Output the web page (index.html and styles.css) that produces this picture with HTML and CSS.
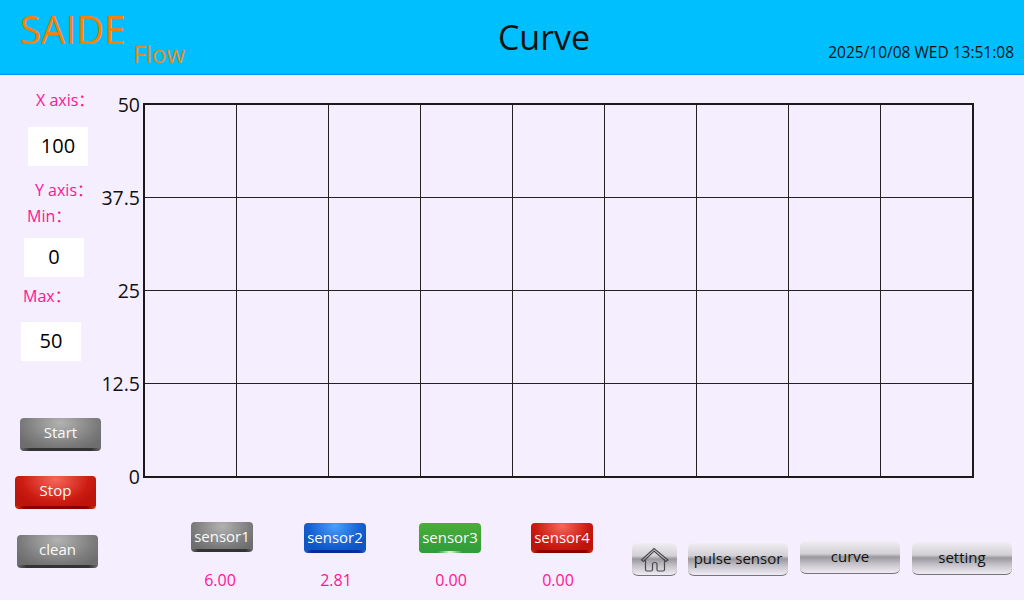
FILE: index.html
```html
<!DOCTYPE html>
<html lang="en">
<head>
    <meta charset="UTF-8">
    <title>Curve</title>
    <link rel="stylesheet" href="styles.css">
</head>
<body>
    <header class="top-bar">
        <div class="logo">
            <span class="logo-main">SAIDE</span>
            <span class="logo-sub">Flow</span>
        </div>
        <h1 class="page-title">Curve</h1>
        <div class="clock">2025/10/08 WED 13:51:08</div>
    </header>

    <div class="content">
        <aside class="side-panel">
            <div class="field-label label-x">X axis：</div>
            <div class="value-box box-x">100</div>
            <div class="field-label label-y">Y axis：</div>
            <div class="field-label label-min">Min：</div>
            <div class="value-box box-min">0</div>
            <div class="field-label label-max">Max：</div>
            <div class="value-box box-max">50</div>
            <button class="btn btn-grey btn-start">Start</button>
            <button class="btn btn-red btn-stop">Stop</button>
            <button class="btn btn-grey btn-clean">clean</button>
        </aside>

        <main class="main-area">
            <div class="chart-wrap">
                <div class="y-axis">
                    <span class="tick"><span>50</span></span>
                    <span class="tick"><span>37.5</span></span>
                    <span class="tick"><span>25</span></span>
                    <span class="tick"><span>12.5</span></span>
                    <span class="tick"><span>0</span></span>
                </div>
                <div class="chart" id="chart">
                    <i></i><i></i><i></i><i></i><i></i><i></i><i></i><i></i><i></i>
                    <i></i><i></i><i></i><i></i><i></i><i></i><i></i><i></i><i></i>
                    <i></i><i></i><i></i><i></i><i></i><i></i><i></i><i></i><i></i>
                    <i></i><i></i><i></i><i></i><i></i><i></i><i></i><i></i><i></i>
                </div>
            </div>

            <footer class="bottom-bar">
                <div class="sensor sensor-1">
                    <button class="btn btn-grey btn-sensor">sensor1</button>
                    <span class="sensor-value">6.00</span>
                </div>
                <div class="sensor sensor-2">
                    <button class="btn btn-blue btn-sensor">sensor2</button>
                    <span class="sensor-value">2.81</span>
                </div>
                <div class="sensor sensor-3">
                    <button class="btn btn-green btn-sensor">sensor3</button>
                    <span class="sensor-value">0.00</span>
                </div>
                <div class="sensor sensor-4">
                    <button class="btn btn-red btn-sensor">sensor4</button>
                    <span class="sensor-value">0.00</span>
                </div>
                <nav class="nav">
                    <button class="nav-btn nav-home" aria-label="home">
                        <svg width="30" height="26" viewBox="0 0 30 26" fill="none" stroke="#4a4a4a" stroke-width="1.2">
                            <path d="M1.5 14 L14 2.5 L28 14 L26 15.5 L14 5 L3.5 15.5 Z"/>
                            <path d="M5.5 13.5 V23.5 Q5.5 25 7 25 H11 Q12.5 25 12.5 23.5 V18.5 Q12.5 16.5 14.7 16.5 Q17 16.5 17 18.5 V23.5 Q17 25 18.5 25 H23 Q24.5 25 24.5 23.5 V13.5"/>
                        </svg>
                    </button>
                    <button class="nav-btn nav-pulse">pulse sensor</button>
                    <button class="nav-btn nav-curve">curve</button>
                    <button class="nav-btn nav-setting">setting</button>
                </nav>
            </footer>
        </main>
    </div>
</body>
</html>
```

FILE: styles.css
```css
* {
    box-sizing: border-box;
}
html, body {
    margin: 0;
    height: 600px;
    overflow: hidden;
}
body {
    display: flex;
    flex-direction: column;
    width: 1024px;
    font-family: "Open Sans", "Noto Sans CJK SC", sans-serif;
    background-color: #f5eeff;
    color: #111;
}

/* header */
.top-bar {
    flex: none;
    display: flex;
    height: 75px;
    background-color: #00bfff;
    border-bottom: 1px solid #0a90f5;
}
.logo {
    display: flex;
    width: 300px;
    padding-left: 20px;
}
.logo-main {
    margin-top: 4px;
    font-size: 38.5px;
    line-height: 50px;
    color: #ff8000;
}
.logo-sub {
    margin: 38px 0 0 8px;
    font-size: 24px;
    line-height: 32px;
    color: #e98a1c;
}
.page-title {
    width: 488px;
    margin: 12px 0 0;
    font-size: 34px;
    font-weight: normal;
    line-height: 50px;
    text-align: center;
}
.clock {
    flex: 1;
    margin: 42px 10px 0 0;
    font-size: 15.5px;
    line-height: 20px;
    text-align: right;
    white-space: nowrap;
}

/* left column */
.content {
    flex: 1;
    display: flex;
    min-height: 0;
}
.side-panel {
    flex: none;
    display: flex;
    flex-direction: column;
    align-items: flex-start;
    width: 143px;
}
.field-label {
    font-size: 16px;
    line-height: 20px;
    color: #ff1493;
    white-space: nowrap;
}
.label-x { margin: 15px 0 0 36px; }
.label-y { margin: 14px 0 0 35px; }
.label-min { margin: 6px 0 0 27px; }
.label-max { margin: 9px 0 0 23px; }
.value-box {
    width: 60px;
    height: 39px;
    padding-bottom: 2px;
    background-color: #fff;
    color: #000;
    font-size: 20px;
    line-height: 37px;
    text-align: center;
}
.box-x { margin: 17px 0 0 28px; }
.box-min { margin: 12px 0 0 24px; }
.box-max { margin: 16px 0 0 21px; }

/* raised buttons */
.btn {
    display: block;
    width: 81px;
    height: 33px;
    padding: 0 0 5px;
    border: 0;
    border-radius: 4px;
    font-family: inherit;
    font-size: 15px;
    color: #fafafa;
}
.btn-grey {
    background:
        linear-gradient(90deg, rgba(0,0,0,0) 0, #333 12%, #333 88%, rgba(0,0,0,0) 100%) bottom / 100% 3px no-repeat,
        radial-gradient(ellipse 60% 90% at 50% 15%, #b2b2b2, #7c7c7c 75%, #6e6e6e);
}
.btn-red {
    background:
        linear-gradient(90deg, #d63a00 0, #8e0000 12%, #8e0000 88%, #d63a00 100%) bottom / 100% 3px no-repeat,
        radial-gradient(ellipse 55% 90% at 50% 10%, #f8665a, #cc1c12 75%, #bd140c);
}
.btn-blue {
    background:
        linear-gradient(90deg, #2a6ad8 0, #0a2a9c 12%, #0a2a9c 88%, #2a6ad8 100%) bottom / 100% 3px no-repeat,
        radial-gradient(ellipse 55% 90% at 50% 10%, #4aa0fa, #1560d2 75%, #0f55c4);
}
.btn-green {
    background:
        linear-gradient(90deg, rgba(240,255,240,0) 30%, #e6f5e0 50%, rgba(240,255,240,0) 70%) bottom / 100% 2px no-repeat,
        linear-gradient(#4aae38, #2f9c3a);
}
.btn-start { margin: 57px 0 0 20px; }
.btn-stop { margin: 25px 0 0 15px; }
.btn-clean { margin: 26px 0 0 17px; }

/* chart */
.main-area {
    flex: 1;
    display: flex;
    flex-direction: column;
    min-width: 0;
}
.chart-wrap {
    position: relative;
    height: 403px;
    padding-top: 28px;
}
.y-axis {
    position: absolute;
    top: 29px;
    right: 884px;
    display: flex;
    flex-direction: column;
    justify-content: space-between;
    height: 372px;
    font-size: 19.5px;
}
.tick {
    display: flex;
    align-items: center;
    justify-content: flex-end;
    height: 0;
}
.chart {
    display: grid;
    grid-template-columns: repeat(9, 92px);
    grid-template-rows: 93px 93px 93px auto;
    width: 831px;
    height: 375px;
    border: 2px solid #1a1a1a;
    background-color: #f5eeff;
}
.chart i {
    border-right: 1px solid #222;
    border-bottom: 1px solid #222;
}
.chart i:nth-child(9n) {
    border-right: 0;
}
.chart i:nth-last-child(-n+9) {
    border-bottom: 0;
}

/* bottom row */
.bottom-bar {
    flex: 1;
    display: flex;
    align-items: flex-start;
}
.sensor {
    display: flex;
    flex-direction: column;
    align-items: center;
    width: 62px;
    margin-top: 44px;
}
.sensor-1 { margin-left: 48px; }
.sensor-2 { margin-top: 45px; margin-left: 51px; }
.sensor-3 { margin-top: 45px; margin-left: 53px; }
.sensor-4 { margin-top: 45px; margin-left: 50px; }
.btn-sensor {
    width: 62px;
    height: 30px;
    padding: 0 0 2px;
    font-size: 15px;
    white-space: nowrap;
}
.sensor-value {
    margin-top: 17px;
    font-size: 16px;
    line-height: 20px;
    color: #ff1493;
}
.sensor-1 .sensor-value { margin-top: 18px; transform: translateX(-2px); }
.sensor-2 .sensor-value { transform: translateX(1px); }
.sensor-3 .sensor-value { transform: translateX(1px); }
.sensor-4 .sensor-value { transform: translateX(-4px); }

.nav {
    display: flex;
    align-items: flex-start;
    margin: 65px 0 0 39px;
}
.nav-btn {
    width: 100px;
    height: 33px;
    padding: 0 0 3px;
    border: 0;
    border-bottom: 1px solid #77727c;
    border-radius: 6px;
    background: linear-gradient(#f0edf3 0, #d2d0d5 40%, #9a989d 50%, #c2c0c6 70%, #f0ecf4 100%);
    font-family: inherit;
    font-size: 15px;
    color: #111;
}
.nav-home {
    display: flex;
    align-items: center;
    justify-content: center;
    width: 45px;
    padding: 0;
}
.nav-pulse { margin-left: 11px; }
.nav-curve { margin: -2px 0 0 12px; }
.nav-setting { margin: -1px 0 0 12px; }
```
